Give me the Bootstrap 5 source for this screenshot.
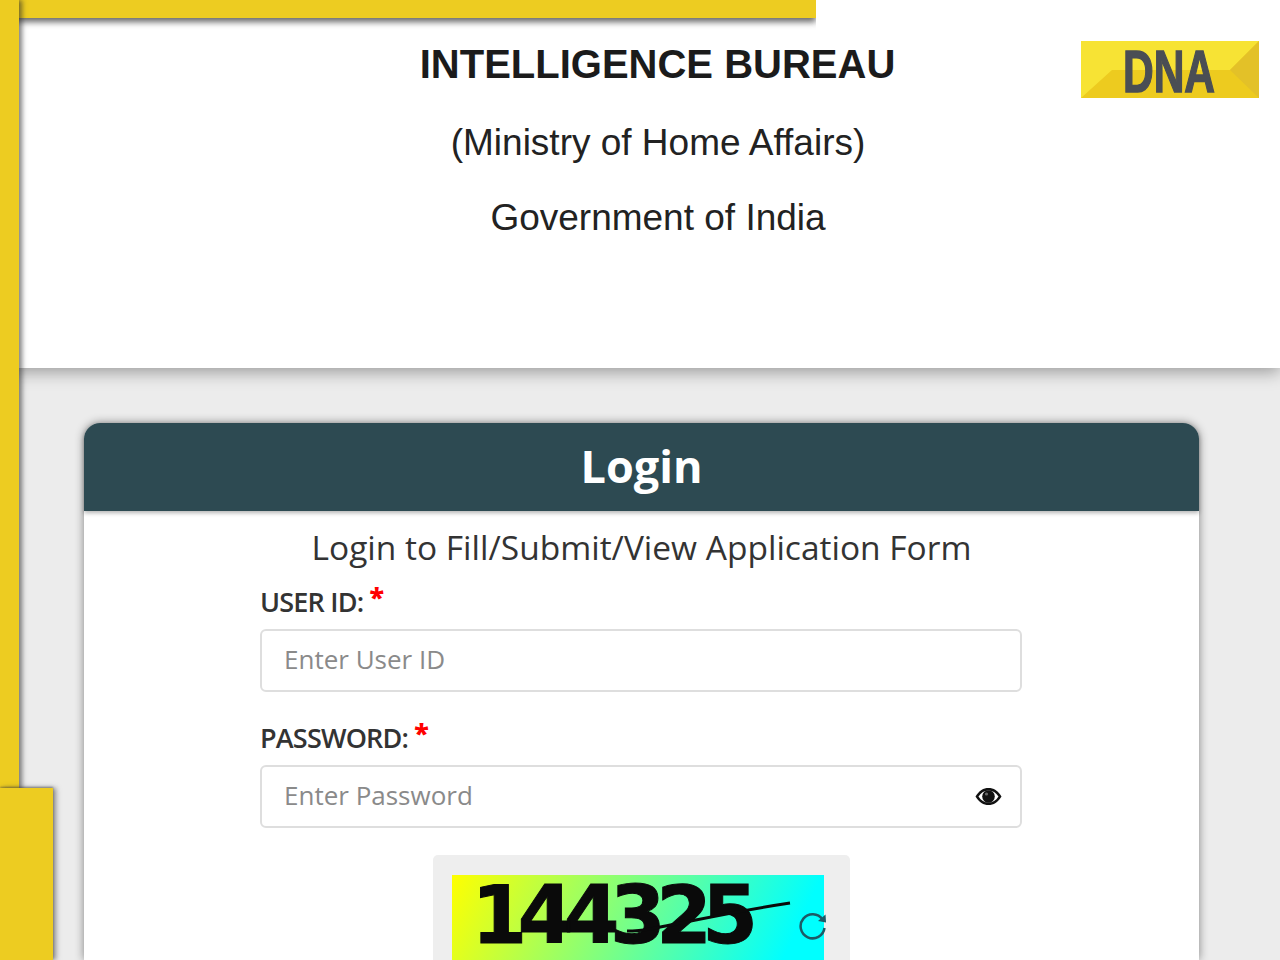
<!DOCTYPE html>
<html lang="en">
<head>
    <meta charset="UTF-8">
    <title>Intelligence Bureau Login</title>
    <meta name="viewport" content="width=device-width, initial-scale=1">
    <link href="https://cdn.jsdelivr.net/npm/bootstrap@5.3.3/dist/css/bootstrap.min.css" rel="stylesheet">
    <style>
        html, body { height: 960px; overflow: hidden; }
        body { background: #ececec; font-family: "Open Sans", sans-serif; position: relative; }
        .frame-top { position: absolute; left: 0; top: 0; width: 816px; height: 18px; background: #edcc21; z-index: 3; box-shadow: 0 4px 6px rgba(40,40,40,.7); clip-path: inset(0 0 -20px 0); }
        .frame-left { position: absolute; left: 0; top: 0; width: 19px; height: 800px; background: #edcc21; z-index: 3; box-shadow: 3px 0 5px rgba(40,40,40,.6); }
        .frame-foot { position: absolute; left: 0; top: 788px; width: 53px; height: 172px; background: #edcc21; z-index: 4; box-shadow: 3px 0 5px rgba(60,60,60,.55), 0 -1px 2px rgba(60,60,60,.5); }
        .site-head { height: 368px; background: #fff; box-shadow: 0 4px 16px rgba(0,0,0,.35); padding-top: 38px; font-family: "Liberation Sans", Arial, sans-serif; color: #222; }
        .head-text { width: 636px; margin-left: 340px; text-align: center; }
        .org-name { font-size: 40px; font-weight: 700; line-height: 52px; margin: 0 0 32px -1px; color: #1b1b1b; }
        .org-line { font-size: 37px; line-height: 42px; margin: 0 0 33px; }
        .dna-logo { position: absolute; left: 1081px; top: 41px; width: 178px; height: 57px; overflow: visible; }
        .login-wrap { margin: 55px 81px 0 84px; }
        .login-card { border: 0; border-radius: 16px 16px 0 0; box-shadow: 0 0 10px rgba(0,0,0,.45); background: #fff; height: 537px; }
        .login-head { height: 88px; background: #2d4a52; color: #fff; border-radius: 16px 16px 0 0; font-size: 45px; font-weight: 700; line-height: 86px; text-align: center; box-shadow: 0 2px 4px rgba(0,0,0,.3); }
        .login-sub { font-size: 33.500px; line-height: 44px; color: #333; text-align: center; margin: 14px 0 0; }
        .login-form { width: 762px; margin-left: 176px; }
        .field-label { font-size: 27px; font-weight: 600; color: #333; line-height: 36px; margin: 15px 0 9px; display: block; letter-spacing: -.8px; }
        .field-label-next { margin-top: 28px; }
        .field-label b { color: #f00; font-size: 27px; position: relative; top: -5px; }
        .field-input { height: 63px; border: 2px solid #dedede; border-radius: 6px; font-size: 26px; padding: 0 22px 3px; color: #555; font-family: "Open Sans", sans-serif; }
        .field-input::placeholder { color: #8a8a8a; }
        .pass-box { position: relative; }
        .pass-eye { position: absolute; right: 20px; top: 20px; width: 27px; height: 23px; }
        .captcha-box { width: 417px; height: 105px; margin: 27px auto 0; background: #eee; border-radius: 5px 5px 0 0; padding: 20px 0 0 19px; position: relative; }
        .captcha-img { width: 372px; height: 85px; background: linear-gradient(115deg, #ff0 0%, #0ff 90%); position: relative; color: #0a0a0a; }
        .captcha-num { font-family: "DejaVu Sans", sans-serif; font-weight: 700; font-size: 80px; letter-spacing: -9.500px; line-height: 74px; padding: 4px 0 0 20px; -webkit-text-stroke: 1px #0a0a0a; }
        .captcha-line { position: absolute; left: 0; top: 0; width: 372px; height: 85px; }
        .captcha-refresh { position: absolute; left: 365px; top: 55px; width: 30px; height: 30px; }
    </style>
</head>
<body>
    <div class="frame-top"></div>
    <div class="frame-left"></div>
    <div class="frame-foot"></div>

    <header class="site-head">
        <div class="head-text">
            <p class="org-name">INTELLIGENCE BUREAU</p>
            <p class="org-line">(Ministry of Home Affairs)</p>
            <p class="org-line">Government of India</p>
        </div>
    </header>
    <svg class="dna-logo" viewBox="0 0 178 57">
        <rect width="178" height="57" fill="#f7e334"/>
        <polygon points="0,57 31,29 149,29 178,0 178,57" fill="#edcb1f"/>
        <polygon points="178,0 178,57 149,29" fill="#e3c128"/>
        <text x="88" y="51" text-anchor="middle" font-family="Liberation Sans, sans-serif" font-weight="700" font-size="60" textLength="92" lengthAdjust="spacingAndGlyphs" stroke="#4a4e54" stroke-width="1.500" fill="#4a4e54">DNA</text>
    </svg>

    <main class="login-wrap">
        <div class="card login-card">
            <div class="login-head">Login</div>
            <p class="login-sub">Login to Fill/Submit/View Application Form</p>
            <form class="login-form" autocomplete="off">
                <label class="field-label" for="user_id">USER ID: <b>*</b></label>
                <input type="text" class="form-control field-input" id="user_id" placeholder="Enter User ID">
                <label class="field-label field-label-next" for="password">PASSWORD: <b>*</b></label>
                <div class="pass-box">
                    <input type="password" class="form-control field-input" id="password" placeholder="Enter Password">
                    <svg class="pass-eye" viewBox="0 0 27 23">
                        <path d="M0.5 11.5C4 5.5 8.5 3 13.5 3s9.5 2.5 13 8.500c-3.500 6-8 8.500-13 8.500s-9.500-2.500-13-8.500z" fill="#111"/>
                        <path d="M3.500 11.500C6 7.500 9.500 5.500 13.500 5.500s7.500 2 10 6c-2.500 4-6 6-10 6s-7.500-2-10-6z" fill="#fff"/>
                        <circle cx="13.500" cy="11.500" r="6.300" fill="#111"/>
                        <circle cx="11.500" cy="9" r="1.600" fill="#666"/>
                    </svg>
                </div>
                <div class="captcha-box">
                    <div class="captcha-img">
                        <div class="captcha-num">144325</div>
                        <svg class="captcha-line" viewBox="0 0 372 85">
                            <path d="M175 56 C205 56 245 42 338 28" fill="none" stroke="#0a0a0a" stroke-width="3"/>
                        </svg>
                    </div>
                    <svg class="captcha-refresh" viewBox="0 0 30 30">
                        <path d="M24.500 9.500A12 12 0 1 0 26.500 18" fill="none" stroke="#1d5a66" stroke-width="2.500"/>
                        <path d="M20 11l8 1.500-.5-8z" fill="#1d5a66"/>
                    </svg>
                </div>
            </form>
        </div>
    </main>
    <script src="https://cdn.jsdelivr.net/npm/bootstrap@5.3.3/dist/js/bootstrap.bundle.min.js"></script>
</body>
</html>
